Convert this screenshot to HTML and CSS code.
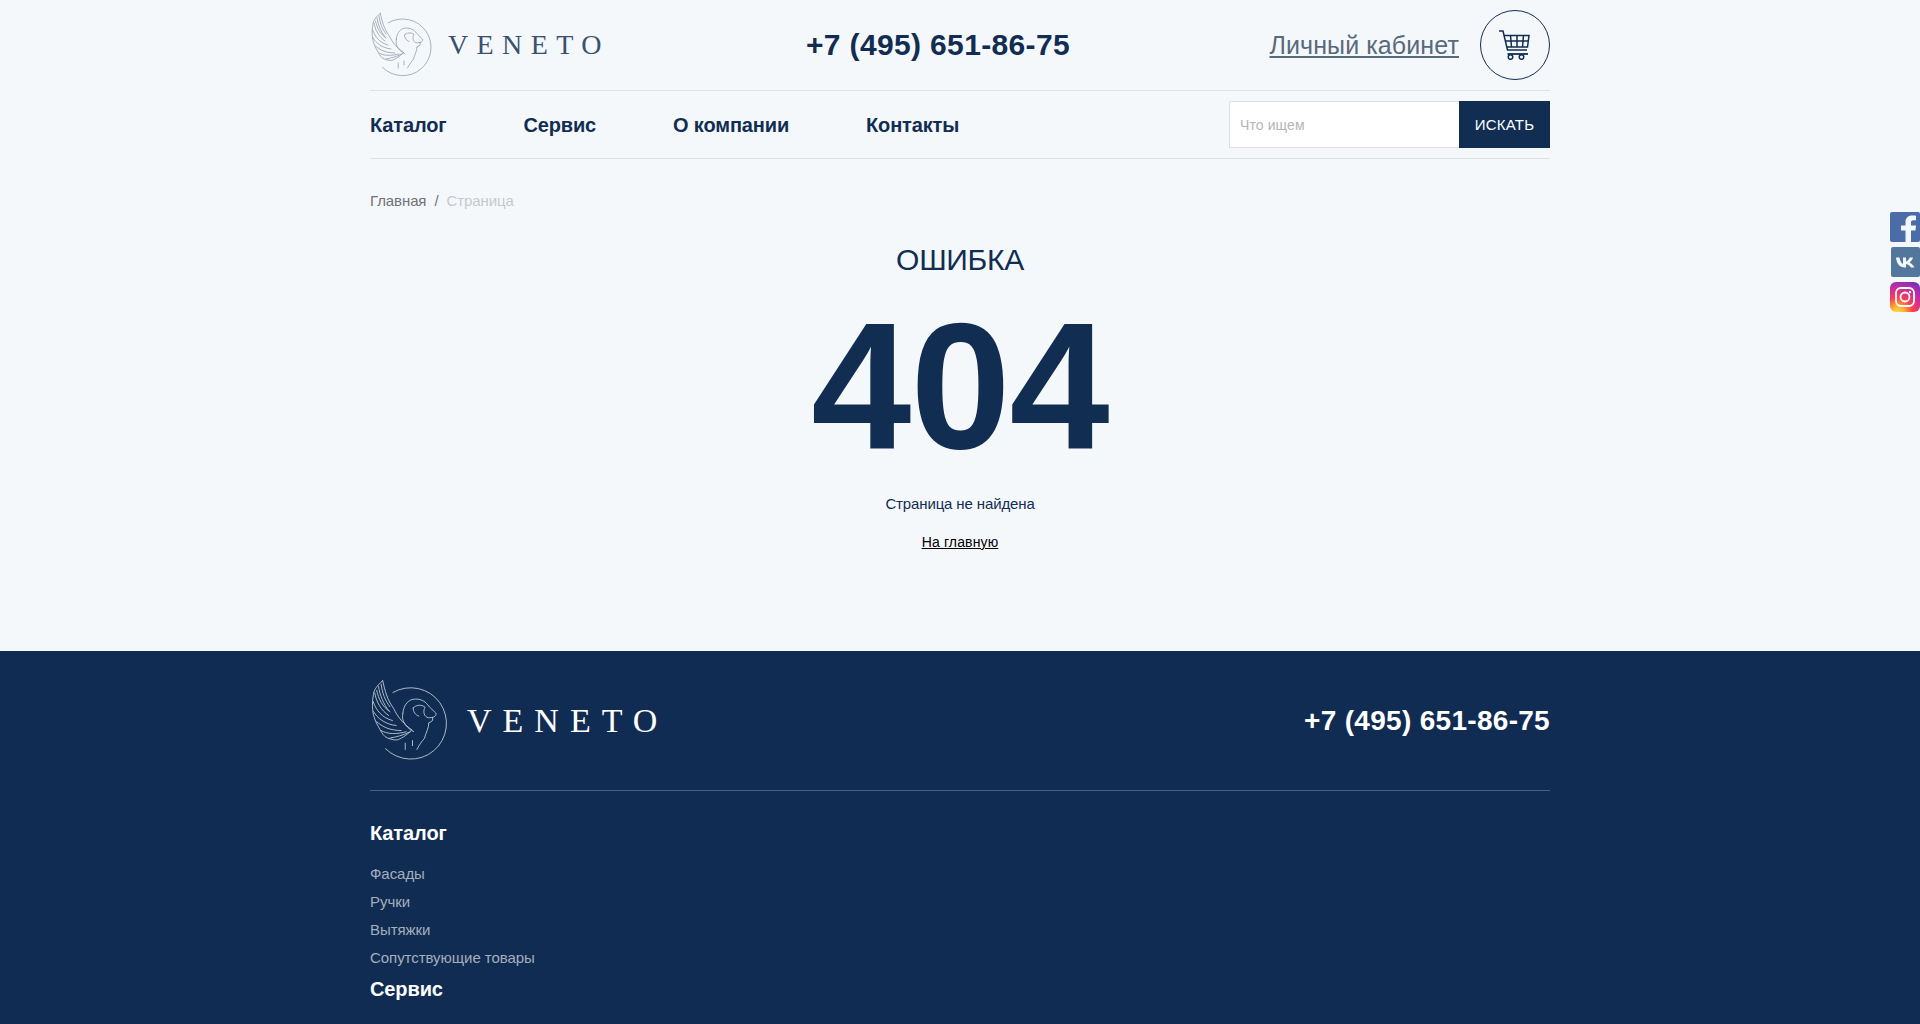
FILE: index.html
```html
<!DOCTYPE html>
<html lang="ru">
<head>
    <title>Страница не найдена</title>
    <meta charset="UTF-8">
    <link rel="stylesheet" href="styles.css">
</head>
<body>

<svg class="defs" width="0" height="0">
    <symbol id="lion" viewBox="0 0 62 66">
        <g fill="none" stroke="currentColor" stroke-width="0.7" stroke-linecap="round" stroke-linejoin="round">
            <path d="M17.4 10.7A28.4 28.4 0 1 1 11.5 55.4"/>
            <!-- wing -->
            <path d="M9.300 1.300C5 5 2 9 1.900 12.500 0.800 18 1 24 1.900 28.500 3 32 4 35 5.900 37.900 7.500 41 9 44 11.200 45.800 14 47.500 17 48.500 20.500 48.500 24 47.500 28 45 32 41"/>
            <path d="M9.300 1.300C11 9 13 17 17.900 23.200 21 30 26 36 32.500 40.500"/>
            <path d="M6 6C7 13 10 20 14 25M3 11C4 18 8 25 14 29M1.700 18C4 25 9 31 17 33M2 26C5 31 11 36 20 37M4.500 34C9 38 15 41 24 41M8 41C13 44 20 44 28 42M15 47C20 46 25 45 31 42"/>
            <path d="M8 4C9 11 11 17 15 22M4.500 9C6 16 9 22 15 26"/>
            <!-- head -->
            <path d="M25.300 27.200C26 20 30 16 35.200 16 39 15.800 43 17.500 45 20.500 47 23 50 25.500 51.500 27 52.300 28.500 51 30 49 30.500L49 33 46 35"/>
            <path d="M33.500 23C36 20.500 40 20 43 22.500 41.500 25 41.500 28.500 44.500 30.500 46 31 47.500 30.800 49 30.500"/>
            <path d="M33.500 23C33.500 26 35 28.500 38 29.500"/>
            <path d="M46 35C46 39 43.500 43 42.500 47.200 40.500 49.500 38.500 52 36.500 56"/>
            <path d="M25.300 27.200C24.800 30 25 32 25.900 33.900 27.500 37 30 40 33.900 41.800"/>
            <path d="M27.200 51V56M33 49V53"/>
        </g>
    </symbol>
</svg>

<div class="wrap">
    <header class="top">
        <a class="logo" href="#">
            <svg class="logo-pic"><use href="#lion"/></svg>
            <span class="logo-name">VENETO</span>
        </a>
        <a class="phone" href="#">+7 (495) 651-86-75</a>
        <div class="account">
            <a class="account-link" href="#">Личный кабинет</a>
            <a class="cart" href="#">
                <svg width="32" height="30" viewBox="0 0 32 30" fill="none" stroke="#112d52" stroke-width="1.500">
                    <path d="M0 1H4L8.500 20H28"/>
                    <path d="M5 5.500H30L28.500 17H7.500"/>
                    <path d="M11.500 5.500L12.500 17M18 5.500V17M24.500 5.500L23.500 17M6.300 11H29"/>
                    <path d="M8.500 24H29" stroke-width="1.800"/>
                    <circle cx="11.500" cy="27" r="2.300"/>
                    <circle cx="22.500" cy="27" r="2.300"/>
                </svg>
            </a>
        </div>
    </header>

    <nav class="menu">
        <div class="menu-links">
            <a href="#">Каталог</a>
            <a href="#">Сервис</a>
            <a href="#">О компании</a>
            <a href="#">Контакты</a>
        </div>
        <form class="search">
            <input type="text" placeholder="Что ищем">
            <button type="button">ИСКАТЬ</button>
        </form>
    </nav>

    <div class="crumbs">
        <a href="#">Главная</a><span class="sep">/</span><span class="current">Страница</span>
    </div>

    <main class="error">
        <h1>ОШИБКА</h1>
        <div class="code">404</div>
        <p>Страница не найдена</p>
        <a href="#">На главную</a>
    </main>
</div>

<footer class="bottom">
    <div class="wrap">
        <div class="bottom-top">
            <a class="logo logo-light" href="#">
                <svg class="logo-pic"><use href="#lion"/></svg>
                <span class="logo-name">VENETO</span>
            </a>
            <a class="phone" href="#">+7 (495) 651-86-75</a>
        </div>
        <h3>Каталог</h3>
        <ul>
            <li><a href="#">Фасады</a></li>
            <li><a href="#">Ручки</a></li>
            <li><a href="#">Вытяжки</a></li>
            <li><a href="#">Сопутствующие товары</a></li>
        </ul>
        <h3 class="next">Сервис</h3>
    </div>
</footer>

<div class="social">
    <a href="#" class="soc-fb">
        <svg width="30" height="30" viewBox="0 0 30 30"><rect width="30" height="30" rx="2" fill="#4a6ca8"/><path d="M21 30V18.500H25.500L26 13.500H21V10.500C21 9 21.700 8.300 23.300 8.300H26V3.700C25 3.600 23.700 3.500 22 3.500 18 3.500 15.500 6 15.500 10V13.500H11V18.500H15.500V30Z" fill="#f5f8fb"/></svg>
    </a>
    <a href="#" class="soc-vk">
        <svg width="29" height="30" viewBox="0 0 29 30"><rect width="29" height="30" rx="2" fill="#52769c"/><path d="M5 10.500H8.500C8.800 13 10 16 12 17V10.500H15V14.500C16.500 14 18 12 18.800 10.500H22C21.500 12.500 19.800 14.500 18.500 15.500 20 16.300 22.200 18 23.500 20.500H20C19 18.800 17.300 17.300 15 17V20.500H14C8.500 20.500 5.500 16.500 5 10.500Z" fill="#f5f8fb"/></svg>
    </a>
    <a href="#" class="soc-ig">
        <svg width="30" height="30" viewBox="0 0 30 30">
            <defs>
                <radialGradient id="ig" cx="0.25" cy="1.05" r="1.150">
                    <stop offset="0" stop-color="#ffdd55"/>
                    <stop offset="0.2" stop-color="#ffb52e"/>
                    <stop offset="0.45" stop-color="#ff3f4f"/>
                    <stop offset="0.75" stop-color="#c72d9e"/>
                    <stop offset="1" stop-color="#7d2dc0"/>
                </radialGradient>
            </defs>
            <rect width="30" height="30" rx="6" fill="url(#ig)"/>
            <rect x="6" y="6" width="18" height="18" rx="5" fill="none" stroke="#fff" stroke-width="1.800"/>
            <circle cx="15" cy="15" r="4.500" fill="none" stroke="#fff" stroke-width="1.800"/>
            <circle cx="20" cy="10" r="1.200" fill="#fff"/>
        </svg>
    </a>
</div>

</body>
</html>
```

FILE: styles.css
```css
* {
    box-sizing: border-box;
}
html, body {
    margin: 0;
    padding: 0;
}
body {
    background: #f5f8fb;
    font-family: "Liberation Sans", Arial, sans-serif;
    color: #112d52;
    overflow-x: hidden;
}
a {
    color: inherit;
    text-decoration: none;
}
.defs {
    display: block;
    height: 0;
}
.wrap {
    width: 1180px;
    margin: 0 auto;
}

/* header */
.top {
    height: 91px;
    display: grid;
    grid-template-columns: 436px auto 1fr;
    align-items: center;
    border-bottom: 1px solid #dde1e6;
}
.logo {
    display: flex;
    align-items: center;
    padding-left: 1px;
    color: #84939f;
}
.logo-pic {
    width: 62px;
    height: 66px;
}
.logo-name {
    margin-left: 15px;
    font-family: "Liberation Serif", serif;
    font-size: 28px;
    letter-spacing: 8.400px;
    color: #3a5070;
}
.phone {
    font-size: 30px;
    font-weight: bold;
    letter-spacing: 0.350px;
}
.account {
    display: flex;
    align-items: center;
    justify-content: flex-end;
    gap: 21px;
}
.account-link {
    font-size: 25px;
    letter-spacing: 0.100px;
    color: #586a7c;
    text-decoration: underline;
}
.cart {
    width: 70px;
    height: 70px;
    border: 1px solid #112d52;
    border-radius: 50%;
    display: flex;
    align-items: center;
    justify-content: center;
}

/* menu */
.menu {
    height: 68px;
    display: flex;
    align-items: center;
    justify-content: space-between;
    border-bottom: 1px solid #dde1e6;
}
.menu-links {
    display: flex;
    gap: 77px;
    padding-top: 1px;
    font-size: 20px;
    font-weight: bold;
    letter-spacing: -0.150px;
}
.search {
    display: flex;
    margin: 0;
}
.search input {
    width: 230px;
    height: 47px;
    padding: 0 10px;
    border: 1px solid #dde1e6;
    border-right: 0;
    background: #fff;
    font: 14px "Liberation Sans", Arial, sans-serif;
    letter-spacing: 0.100px;
}
.search input::placeholder {
    color: #b5b5b5;
}
.search button {
    width: 91px;
    height: 47px;
    border: 0;
    background: #112d52;
    color: #fff;
    font: 15px "Liberation Sans", Arial, sans-serif;
    letter-spacing: 0.200px;
}

.crumbs {
    padding-top: 33px;
    font-size: 15px;
    line-height: 17px;
    letter-spacing: -0.100px;
    color: #6f7275;
}
.sep {
    margin: 0 8px;
}
.current {
    color: #c6c9cd;
}

/* 404 */
.error {
    height: 442px;
    padding-top: 33px;
    text-align: center;
}
.error h1 {
    margin: 0;
    font-size: 30px;
    font-weight: normal;
    line-height: 36px;
    letter-spacing: -0.300px;
}
.code {
    margin-top: 5px;
    font-size: 180px;
    font-weight: bold;
    line-height: 206px;
    letter-spacing: -1px;
}
.error p {
    margin: 6px 0 0;
    font-size: 15px;
    line-height: 17px;
    letter-spacing: -0.130px;
}
.error a {
    display: inline-block;
    margin-top: 22px;
    font-size: 14px;
    line-height: 17px;
    letter-spacing: 0.150px;
    color: #000;
    text-decoration: underline;
}

/* footer */
.bottom {
    height: 373px;
    background: #102c52;
    color: #fff;
}
.bottom-top {
    height: 140px;
    display: flex;
    align-items: center;
    justify-content: space-between;
    border-bottom: 1px solid #4a6080;
}
.logo-light {
    color: #c3ccd7;
}
.logo-light .logo-pic {
    width: 78px;
    height: 83px;
}
.logo-light .logo-name {
    margin-left: 18px;
    font-size: 34px;
    letter-spacing: 11px;
    color: #fff;
}
.bottom .phone {
    font-size: 28px;
    letter-spacing: 0.300px;
}
.bottom h3 {
    margin: 30px 0 0;
    font-size: 20px;
    line-height: 24px;
    letter-spacing: -0.100px;
}
.bottom h3.next {
    margin-top: 5px;
}
.bottom ul {
    list-style: none;
    margin: 15px 0 0;
    padding: 0;
    font-size: 15px;
    letter-spacing: -0.050px;
    color: #a4afbd;
}
.bottom li {
    height: 28px;
    line-height: 28px;
}

/* side icons */
.social {
    position: fixed;
    right: 0;
    top: 212px;
    display: flex;
    flex-direction: column;
    align-items: flex-end;
    gap: 5px;
}
.social a, .social svg {
    display: block;
}
```
